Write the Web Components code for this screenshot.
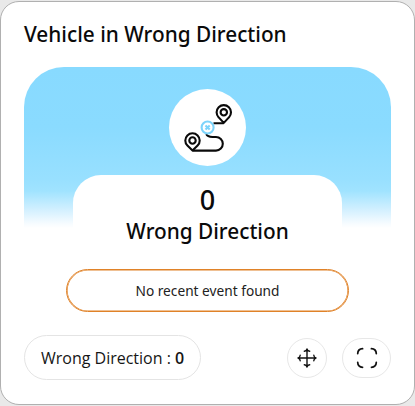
<!DOCTYPE html>
<html lang="en">
<head>
<meta charset="utf-8">
<title>Vehicle in Wrong Direction</title>
<style>
html,body{margin:0;height:100%}
body{background:#e9e9e9;font-family:"Noto Sans","Open Sans",sans-serif;color:#0a0a0a;overflow:hidden}
</style>
</head>
<body>
<event-card heading="Vehicle in Wrong Direction">
  <stat-banner value="0" label="Wrong Direction"><route-icon></route-icon></stat-banner>
  <status-pill>No recent event found</status-pill>
  <count-chip slot="footer" label="Wrong Direction :">0</count-chip>
  <icon-button slot="footer" kind="move"></icon-button>
  <icon-button slot="footer" kind="expand"></icon-button>
</event-card>
<script>
class BaseElement extends HTMLElement {
  constructor() {
    super();
    this.attachShadow({mode: 'open'});
  }
  connectedCallback() {
    this.shadowRoot.innerHTML = this.render();
  }
}

customElements.define('event-card', class extends BaseElement {
  render() {
    return `<style>
      :host{display:flex;flex-direction:column;box-sizing:border-box;width:415px;height:404px;margin-top:1px;
        padding:0 23px;background:#fff;border:1px solid #b0b0b0;border-radius:19px}
      h1{margin:17px 0 0;height:32px;line-height:31px;font-size:20.8px;font-weight:500;white-space:nowrap}
      main{display:flex;flex-direction:column;align-items:center;margin-top:16px;gap:22px}
      footer{display:flex;align-items:center;margin-top:23px}
    </style>
    <h1>${this.getAttribute('heading')}</h1>
    <main><slot></slot></main>
    <footer><slot name="footer"></slot></footer>`;
  }
});

customElements.define('stat-banner', class extends BaseElement {
  render() {
    return `<style>
      :host{display:flex;flex-direction:column;align-items:center;box-sizing:border-box;width:367px;height:180px;padding-top:22px;
        border-radius:40px 40px 0 0;
        background:linear-gradient(#88daff 0,#8adbff 60px,#98e0ff 112px,#a0e3ff 124px,#d3f0ff 143px,#f5fbff 156px,#fff 161px)}
      .badge{display:flex;align-items:center;justify-content:center;width:77px;height:77px;border-radius:50%;background:#fff}
      .panel{width:269px;height:72px;margin-top:9px;border-radius:28px 28px 0 0;background:#fff;text-align:center}
      .value{padding-top:7px;height:36px;line-height:36px;font-size:27px;font-weight:500}
      .label{height:27px;line-height:26px;font-size:20.8px;font-weight:500;white-space:nowrap}
    </style>
    <div class="badge"><slot></slot></div>
    <div class="panel">
      <div class="value">${this.getAttribute('value')}</div>
      <div class="label">${this.getAttribute('label')}</div>
    </div>`;
  }
});

customElements.define('route-icon', class extends BaseElement {
  render() {
    return `<style>:host{display:block;width:50px;height:50px}svg{display:block}</style>
    <svg width="50" height="50" viewBox="182.5 102.5 50 50" fill="none" stroke="#0a0a0a" stroke-width="2.1" stroke-linejoin="round">
      <path d="M223.3 122.7H213M205.8 133.7C206.8 136.2 209.5 136.5 212 136.5H215.5A6.8 6.8 0 0 1 215.5 150.1H192"/>
      <path d="M223.3 122.4L218.2 116.9A7.2 7.2 0 1 1 228.4 116.9Z"/>
      <path d="M192 150L186.9 145.1A7.2 7.2 0 1 1 197.1 145.1Z"/>
      <circle cx="223.3" cy="111.8" r="3.2"/><circle cx="192" cy="140" r="3.2"/>
      <circle cx="207.1" cy="127" r="6" stroke="#7dd4fb" fill="#fff"/>
      <path d="M205 124.9L209.2 129.1M209.2 124.9L205 129.1" stroke="#7dd4fb"/>
    </svg>`;
  }
});

customElements.define('status-pill', class extends BaseElement {
  render() {
    return `<style>
      :host{display:block;box-sizing:border-box;width:283px;height:43px;border:1px solid #e08228;border-radius:22px;
        box-shadow:inset 0 0 0 .6px #e08228;text-align:center;line-height:42px;font-size:13.7px;color:#222;white-space:nowrap}
    </style><slot></slot>`;
  }
});

customElements.define('count-chip', class extends BaseElement {
  render() {
    return `<style>
      :host{display:flex;align-items:center;justify-content:center;gap:4px;box-sizing:border-box;width:177px;height:45px;
        margin-right:auto;border:1px solid #e4e4e4;border-radius:23px;font-family:"Open Sans",sans-serif;font-size:16px;color:#161616;white-space:nowrap}
      b{font-weight:600}
    </style><span>${this.getAttribute('label')}</span><b><slot></slot></b>`;
  }
});

const ICONS = {
  move: '<path d="M11 2V20M2 11H20M8.3 4.2Q10.6 4 11 2Q11.4 4 13.7 4.2M8.3 17.8Q10.6 18 11 20Q11.4 18 13.7 17.8M4.2 8.3Q4 10.6 2 11Q4 11.4 4.2 13.7M17.8 8.3Q18 10.6 20 11Q18 11.4 17.8 13.7" stroke-width="1.4"/>',
  expand: '<path d="M1.7 6.6Q1.9 2 6.6 1.7M15.4 1.7Q20.1 2 20.3 6.6M20.3 15.4Q20.1 20 15.4 20.3M6.6 20.3Q1.9 20 1.7 15.4" stroke-width="1.7"/>'
};
customElements.define('icon-button', class extends BaseElement {
  render() {
    return `<style>
      :host{display:flex;align-items:center;justify-content:center;box-sizing:border-box;height:40px;border:1px solid #e7e7e7;border-radius:20px}
      :host([kind=move]){width:40px}
      :host([kind=expand]){width:49px;margin-left:15px}
    </style>
    <svg width="22" height="22" viewBox="0 0 22 22" fill="none" stroke="#111" stroke-linecap="round" stroke-linejoin="round">${ICONS[this.getAttribute('kind')]}</svg>`;
  }
});
</script>
</body>
</html>
